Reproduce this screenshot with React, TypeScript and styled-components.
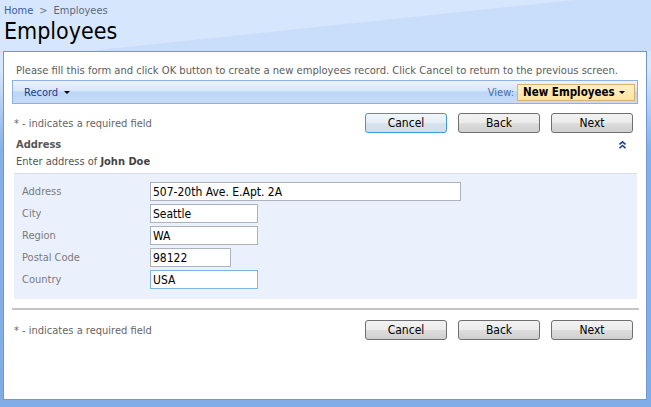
import React from 'react';
import styled, { createGlobalStyle } from 'styled-components';

const GlobalStyle = createGlobalStyle`
  html, body {
    margin: 0;
    padding: 0;
  }
  body {
    font-family: "DejaVu Sans Condensed", "DejaVu Sans", Tahoma, sans-serif;
    font-stretch: condensed;
    font-size: 11px;
  }
  button, input {
    font-family: inherit;
    font-stretch: condensed;
  }
`;

const Page = styled.div`
  width: 651px;
  height: 407px;
  box-sizing: border-box;
  display: flex;
  flex-direction: column;
  padding: 0 4px 7px 3px;
  background: linear-gradient(to bottom, #d6e6fc 0, #d6e6fc 70px, #86b0ea 150px, #80ace8 100%);
`;

const Header = styled.div`
  height: 51px;
  margin: 0 -4px 0 -3px;
  padding-left: 4px;
  box-sizing: border-box;
  background: linear-gradient(174deg, rgba(255, 255, 255, 0) 0, rgba(255, 255, 255, 0) 50%, rgba(170, 202, 246, 0.3) 51%, rgba(170, 202, 246, 0.3) 100%);
`;

const Crumbs = styled.div`
  padding-top: 4px;
  height: 14px;
  line-height: 14px;
  font-size: 11px;
  color: #5a6a80;
`;

const CrumbLink = styled.span`
  color: #3b5ca6;
`;

const Sep = styled.span`
  margin: 0 6px;
  color: #6a7a90;
`;

const Title = styled.h1`
  margin: 0;
  font-size: 23px;
  font-weight: normal;
  line-height: 26px;
  color: #000;
`;

const Panel = styled.div`
  flex: 1;
  background: #fff;
  border: 1px solid #6e98d6;
  padding: 0 8px;
  display: flex;
  flex-direction: column;
`;

const Intro = styled.div`
  margin-top: 10px;
  padding-left: 4px;
  height: 17px;
  line-height: 17px;
  font-size: 11.1px;
  color: #5c5c5c;
  white-space: nowrap;
`;

const Toolbar = styled.div`
  margin-top: 1px;
  height: 24px;
  box-sizing: border-box;
  border: 1px solid #8eb1e3;
  background: linear-gradient(to bottom, #ecf3fd 0, #d6e6fb 45%, #bdd6f7 50%, #c6dcf9 100%);
  display: flex;
  align-items: center;
  justify-content: space-between;
  padding: 0 2px 0 11px;
`;

const MenuItem = styled.div`
  display: flex;
  align-items: center;
  gap: 6px;
  color: #1c3d8c;
`;

const Caret = styled.span`
  width: 0;
  height: 0;
  border-left: 3px solid transparent;
  border-right: 3px solid transparent;
  border-top: 3px solid #000;
`;

const ViewGroup = styled.div`
  display: flex;
  align-items: center;
  gap: 3px;
  color: #4a6ea5;
`;

const ViewSelect = styled.div`
  width: 118px;
  height: 17px;
  box-sizing: border-box;
  border: 1px solid #d9b36b;
  background: linear-gradient(to bottom, #fff0c8 0, #ffe3a0 100%);
  display: flex;
  align-items: center;
  justify-content: space-between;
  padding: 0 9px 0 5px;
  font-size: 11.5px;
  font-weight: bold;
  color: #000;
  white-space: nowrap;
`;

const ActionRow = styled.div<{ $top: number }>`
  margin-top: ${(p) => p.$top}px;
  height: 20px;
  display: flex;
  align-items: center;
  justify-content: space-between;
  padding: 0 5px 0 2px;
`;

const Note = styled.div`
  color: #666;
`;

const Buttons = styled.div`
  display: flex;
  gap: 11px;
`;

const Button = styled.button<{ $focus?: boolean }>`
  width: 82px;
  height: 20px;
  box-sizing: border-box;
  border-radius: 3px;
  border: 1px solid ${(p) => (p.$focus ? '#3c99d8' : '#707070')};
  background: ${(p) =>
    p.$focus
      ? 'linear-gradient(to bottom, #f1f6fa 0, #e6eef5 50%, #d7e3ee 51%, #d0dfec 100%)'
      : 'linear-gradient(to bottom, #f2f2f2 0, #ebebeb 50%, #dddddd 51%, #cfcfcf 100%)'};
  font-size: 12px;
  color: #000;
  padding: 0;
`;

const SectionHead = styled.div`
  margin-top: 3px;
  height: 17px;
  display: flex;
  align-items: center;
  justify-content: space-between;
  padding: 0 12px 0 4px;
`;

const SectionTitle = styled.div`
  font-weight: bold;
  color: #555;
`;

const SectionHint = styled.div`
  height: 17px;
  line-height: 17px;
  padding-left: 4px;
  color: #555;
  b {
    color: #444;
  }
`;

const FieldBox = styled.div`
  margin: 3px 1px 0 2px;
  border-top: 1px solid #d8dee6;
  background: #eaf1fc;
  padding: 8px 0 10px 8px;
  display: flex;
  flex-direction: column;
  gap: 3px;
`;

const FieldRow = styled.div`
  display: flex;
  align-items: center;
  height: 19px;
`;

const Label = styled.div`
  width: 128px;
  color: #7a7a7a;
`;

const Input = styled.input<{ $w: number; $focus?: boolean }>`
  width: ${(p) => p.$w}px;
  height: 19px;
  box-sizing: border-box;
  border: 1px solid ${(p) => (p.$focus ? '#7eb4ea' : '#abb3bd')};
  background: #fff;
  padding: 0 2px;
  font-size: 12px;
  color: #000;
  outline: none;
`;

const Rule = styled.div`
  margin-top: 9px;
  height: 2px;
  margin-right: -1px;
  background: #c4c4c4;
`;

const CollapseIcon = () => (
  <svg width="7" height="8" viewBox="0 0 7 8">
    <polyline points="0.5,3.5 3.5,0.8 6.5,3.5" fill="none" stroke="#1f3f8f" strokeWidth="1.6" />
    <polyline points="0.5,7.2 3.5,4.5 6.5,7.2" fill="none" stroke="#1f3f8f" strokeWidth="1.6" />
  </svg>
);

const fields = [
  { label: 'Address', value: '507-20th Ave. E.Apt. 2A', w: 311 },
  { label: 'City', value: 'Seattle', w: 108 },
  { label: 'Region', value: 'WA', w: 108 },
  { label: 'Postal Code', value: '98122', w: 81 },
  { label: 'Country', value: 'USA', w: 108, focus: true },
];

const Actions: React.FC<{ top: number; focusCancel?: boolean }> = ({ top, focusCancel }) => (
  <ActionRow $top={top}>
    <Note>* - indicates a required field</Note>
    <Buttons>
      <Button $focus={focusCancel}>Cancel</Button>
      <Button>Back</Button>
      <Button>Next</Button>
    </Buttons>
  </ActionRow>
);

export default function App() {
  return (
    <>
      <GlobalStyle />
      <Page>
        <Header>
          <Crumbs>
            <CrumbLink>Home</CrumbLink>
            <Sep>&gt;</Sep>
            Employees
          </Crumbs>
          <Title>Employees</Title>
        </Header>
        <Panel>
          <Intro>
            Please fill this form and click OK button to create a new employees record. Click Cancel to return to the previous screen.
          </Intro>
          <Toolbar>
            <MenuItem>
              Record <Caret />
            </MenuItem>
            <ViewGroup>
              View:
              <ViewSelect>
                New Employees <Caret />
              </ViewSelect>
            </ViewGroup>
          </Toolbar>
          <Actions top={9} focusCancel />
          <SectionHead>
            <SectionTitle>Address</SectionTitle>
            <CollapseIcon />
          </SectionHead>
          <SectionHint>
            Enter address of <b>John Doe</b>
          </SectionHint>
          <FieldBox>
            {fields.map((f) => (
              <FieldRow key={f.label}>
                <Label>{f.label}</Label>
                <Input $w={f.w} $focus={f.focus} defaultValue={f.value} />
              </FieldRow>
            ))}
          </FieldBox>
          <Rule />
          <Actions top={10} />
        </Panel>
      </Page>
    </>
  );
}
